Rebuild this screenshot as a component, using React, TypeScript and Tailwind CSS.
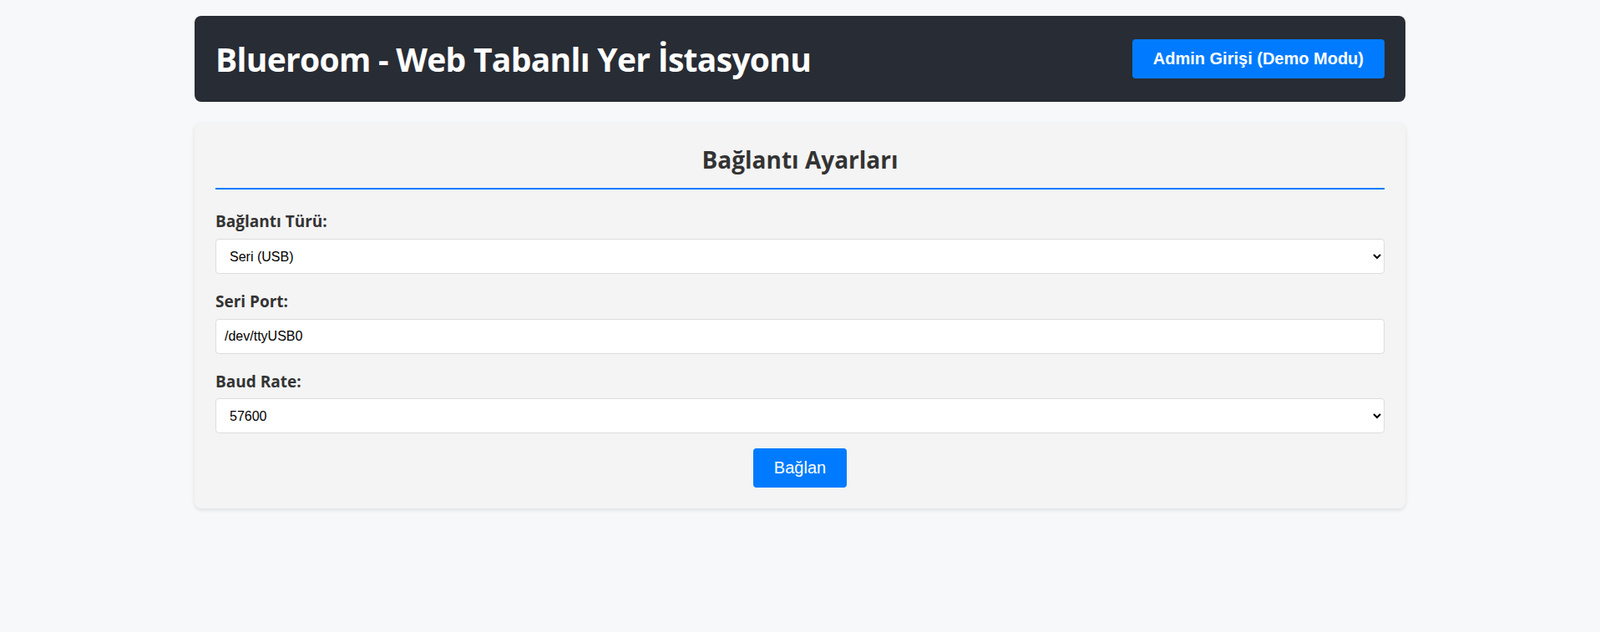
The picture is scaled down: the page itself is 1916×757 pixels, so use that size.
import React from "react";

export default function App() {
  const segoe = { fontFamily: '"Open Sans", "Noto Sans", sans-serif' };
  return (
    <div className="min-h-screen w-full bg-[#f7f8fa] pt-[19px]">
      <div className="mx-auto w-[1450px]">
        <header className="flex h-[103px] items-center justify-between rounded-[8px] bg-[#282c34] px-[25px]">
          <h1
            className="text-[39px] font-bold leading-none tracking-[-0.7px] text-white"
            style={segoe}
          >
            Blueroom - Web Tabanlı Yer İstasyonu
          </h1>
          <button
            className="rounded-[4px] bg-[#007bff] px-[25px] py-[12px] text-[20px] font-bold leading-[23px] text-white font-['Liberation_Sans',Arial,sans-serif]"
          >
            Admin Girişi (Demo Modu)
          </button>
        </header>

        <main className="mt-[25px] rounded-[8px] bg-[#f4f4f4] p-[25px] shadow-[0_2px_5px_rgba(0,0,0,0.1)]">
          <h2
            className="border-b-2 border-[#007bff] pb-[15px] text-center text-[28px] font-bold leading-[38px] text-[#333]"
            style={segoe}
          >
            Bağlantı Ayarları
          </h2>

          <div className="mt-[25px]">
            <div className="mb-[20px]">
              <label
                className="mb-[8px] block text-[19px] font-bold leading-[26px] text-[#333]"
                style={segoe}
              >
                Bağlantı Türü:
              </label>
              <select
                defaultValue="serial"
                className="block h-[42px] w-full rounded-[4px] border border-[#ddd] bg-white px-[12px] text-[16px] text-black font-['Liberation_Sans',Arial,sans-serif]"
              >
                <option value="serial">Seri (USB)</option>
                <option value="udp">UDP</option>
                <option value="tcp">TCP</option>
              </select>
            </div>

            <div className="mb-[20px]">
              <label
                className="mb-[8px] block text-[19px] font-bold leading-[26px] text-[#333]"
                style={segoe}
              >
                Seri Port:
              </label>
              <input
                type="text"
                defaultValue="/dev/ttyUSB0"
                className="block h-[42px] w-full rounded-[4px] border border-[#ddd] bg-white px-[10px] text-[16px] text-black outline-none font-['Liberation_Sans',Arial,sans-serif]"
              />
            </div>

            <div>
              <label
                className="mb-[7px] block text-[19px] font-bold leading-[26px] text-[#333]"
                style={segoe}
              >
                Baud Rate:
              </label>
              <select
                defaultValue="57600"
                className="block h-[42px] w-full rounded-[4px] border border-[#ddd] bg-white px-[12px] text-[16px] text-black font-['Liberation_Sans',Arial,sans-serif]"
              >
                <option value="9600">9600</option>
                <option value="57600">57600</option>
                <option value="115200">115200</option>
              </select>
            </div>

            <div className="mt-[18px] flex justify-center">
              <button className="rounded-[4px] bg-[#007bff] px-[25px] py-[12px] text-[20px] leading-[23px] text-white font-['Liberation_Sans',Arial,sans-serif]">
                Bağlan
              </button>
            </div>
          </div>
        </main>
      </div>
    </div>
  );
}
